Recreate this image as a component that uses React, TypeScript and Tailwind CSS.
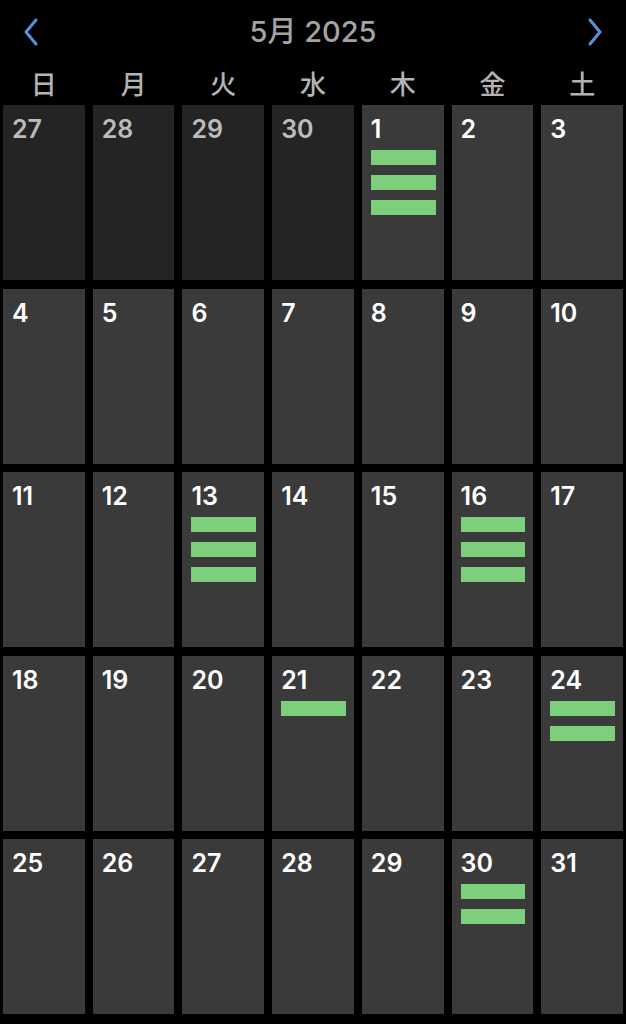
const weekdays = ['日', '月', '火', '水', '木', '金', '土'];

const events: Record<number, number> = { 1: 3, 13: 3, 16: 3, 21: 1, 24: 2, 30: 2 };

type Day = { day: number; current: boolean };

const days: Day[] = [
  ...[27, 28, 29, 30].map((d) => ({ day: d, current: false })),
  ...Array.from({ length: 31 }, (_, i) => ({ day: i + 1, current: true })),
];

function Chevron({ dir }: { dir: 'left' | 'right' }) {
  return (
    <svg width="20" height="30" viewBox="0 0 20 30" fill="none">
      <path
        d={dir === 'left' ? 'M15 3 L5 15 L15 27' : 'M5 3 L15 15 L5 27'}
        stroke="#5b90e0"
        strokeWidth="3"
        strokeLinecap="round"
        strokeLinejoin="round"
      />
    </svg>
  );
}

export default function App() {
  return (
    <div
      className="min-h-[1024px] w-[626px] bg-black"
      style={{ fontFamily: 'Inter, "Noto Sans CJK JP", sans-serif' }}
    >
      {/* header */}
      <div className="flex h-[66px] items-center justify-between px-[21px] pb-[2px]">
        <Chevron dir="left" />
        <span className="text-[29px] font-medium text-[#a3a3a3]">5月 2025</span>
        <Chevron dir="right" />
      </div>
      <div className="grid h-[39px] grid-cols-7 gap-x-[8px] px-[3px]">
        {weekdays.map((w) => (
          <div key={w} className="text-center text-[26px] font-medium leading-[38px] text-[#b3b3b3]">
            {w}
          </div>
        ))}
      </div>

      {/* calendar grid */}
      <div className="grid grid-cols-7 gap-x-[8px] gap-y-[8.5px] px-[3px]">
        {days.map((d, i) => (
          <div
            key={i}
            className={`h-[175px] pl-[9px] pr-[8px] pt-[10px] ${d.current ? 'bg-[#3a3a3a]' : 'bg-[#242424]'}`}
          >
            <div
              className={`text-[25px] font-semibold leading-[28px] ${d.current ? 'text-white' : 'text-[#bcbcbc]'}`}
            >
              {d.day}
            </div>
            {d.current && events[d.day] ? (
              <div className="mt-[7px] flex flex-col gap-[10px]">
                {Array.from({ length: events[d.day] }, (_, k) => (
                  <div key={k} className="h-[15px] bg-[#7dcf7b]" />
                ))}
              </div>
            ) : null}
          </div>
        ))}
      </div>
    </div>
  );
}
